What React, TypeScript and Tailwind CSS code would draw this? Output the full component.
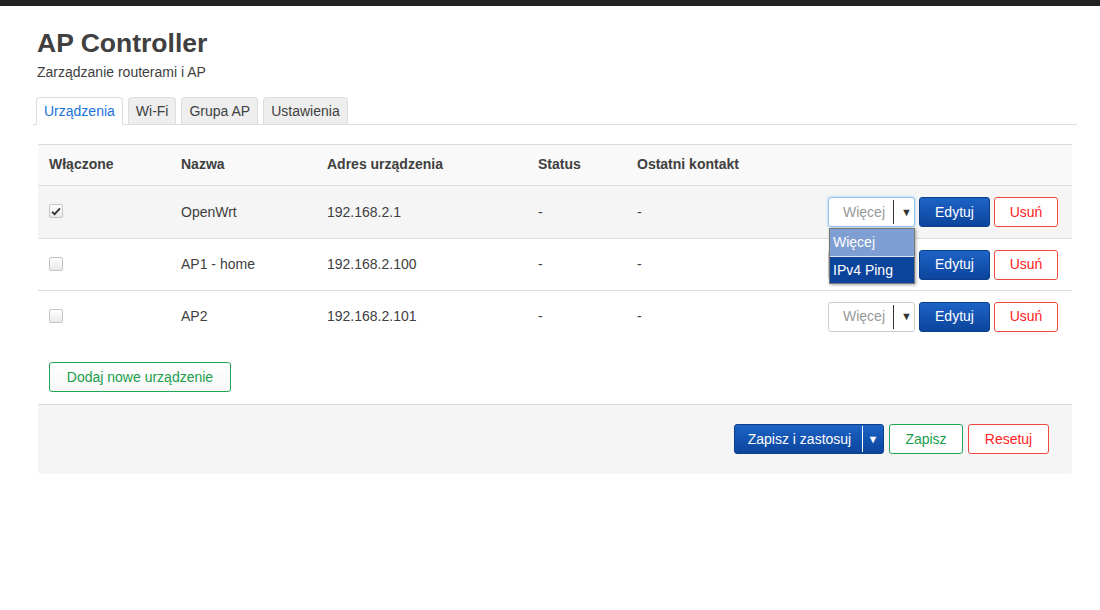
import React from "react";

type Device = { name: string; addr: string; enabled: boolean; open?: boolean };

const devices: Device[] = [
  { name: "OpenWrt", addr: "192.168.2.1", enabled: true, open: true },
  { name: "AP1 - home", addr: "192.168.2.100", enabled: false },
  { name: "AP2", addr: "192.168.2.101", enabled: false },
];

const Check = ({ on }: { on: boolean }) => (
  <div className="flex h-[14px] w-[14px] items-center justify-center rounded-[2px] border border-[#c4c4c4] bg-gradient-to-b from-white to-[#e9e9e9]">
    {on && (
      <svg width="10" height="9" viewBox="0 0 10 9">
        <path d="M1 4.8 L3.6 7.2 L9 1.4" fill="none" stroke="#333" strokeWidth="1.8" />
      </svg>
    )}
  </div>
);

const MoreSelect = ({ open }: { open?: boolean }) => (
  <div className="relative">
    <div
      className={
        open
          ? "flex h-[30px] w-[87px] items-center rounded-[3px] border border-[#8ec2ec] bg-white shadow-[0_0_3px_rgba(102,175,233,0.6)]"
          : "flex h-[30px] w-[87px] items-center rounded-[3px] border border-[#cccccc] bg-white"
      }
    >
      <span className="w-[64px] pl-[14px] text-[#999]">Więcej</span>
      <span className="h-[24px] w-px bg-[#333]" />
      <span className="flex-1 pl-[7px] text-[11px] text-[#333]">▼</span>
    </div>
    {open && (
      <div className="absolute left-px top-[31px] z-10 w-[86px] border border-[#777] bg-white shadow-[1px_1px_3px_rgba(0,0,0,0.35)]">
        <div className="h-[28px] border-b border-[#dbe4f3] bg-[#7f9ed1] pl-[3px] leading-[27px] text-white">Więcej</div>
        <div className="h-[26px] bg-[#0c449c] pl-[3px] leading-[26px] text-white">IPv4 Ping</div>
      </div>
    )}
  </div>
);

const App = () => {
  return (
    <div className="min-h-[610px] bg-white font-['Liberation_Sans',Arial,sans-serif] text-[14px] text-[#404040]">
      <div className="h-[6px] bg-[#222]" />
      <div className="ml-[33px] w-[1044px]">
        <div className="pl-[4px] pt-[23px]">
          <h1 className="text-[26.5px] font-bold leading-[29px] text-[#404040]">AP Controller</h1>
          <p className="mt-[4px] leading-[20px] text-[#404040]">Zarządzanie routerami i AP</p>
        </div>

        <ul className="mt-[15px] flex gap-[5px] border-b border-[#ddd] pl-[3px]">
          <li className="-mb-px h-[28px] rounded-t-[4px] border border-b-white border-[#ddd] bg-white px-[7px] leading-[26px] text-[#1a73d9]">
            Urządzenia
          </li>
          <li className="h-[27px] rounded-t-[4px] border border-b-0 border-[#ddd] bg-[#eee] px-[7px] leading-[26px]">Wi-Fi</li>
          <li className="h-[27px] rounded-t-[4px] border border-b-0 border-[#ddd] bg-[#eee] px-[7px] leading-[26px]">Grupa AP</li>
          <li className="h-[27px] rounded-t-[4px] border border-b-0 border-[#ddd] bg-[#eee] px-[7px] leading-[26px]">Ustawienia</li>
        </ul>

        <div className="ml-[5px] mt-[19px] w-[1034px]">
          <div className="grid h-[41px] grid-cols-[132px_146px_211px_99px_1fr] items-center border-t border-[#ddd] bg-[#f9f9f9] pb-[2px] font-bold">
            <div className="px-[11px]">Włączone</div>
            <div className="px-[11px]">Nazwa</div>
            <div className="px-[11px]">Adres urządzenia</div>
            <div className="px-[11px]">Status</div>
            <div className="px-[11px]">Ostatni kontakt</div>
          </div>
          {devices.map((d, i) => (
            <div
              key={d.name}
              className={
                i === 0
                  ? "grid h-[53px] grid-cols-[132px_146px_211px_99px_1fr] items-center border-t border-[#ddd] bg-[#f5f5f5]"
                  : "grid h-[52px] grid-cols-[132px_146px_211px_99px_1fr] items-center border-t border-[#ddd]"
              }
            >
              <div className="px-[11px] pb-[2px]">
                <Check on={d.enabled} />
              </div>
              <div className="px-[11px]">{d.name}</div>
              <div className="px-[11px]">{d.addr}</div>
              <div className="px-[11px]">-</div>
              <div className="flex items-center justify-between pl-[11px] pr-[14px]">
                <span>-</span>
                <div className="flex items-center gap-[4px]">
                  <MoreSelect open={d.open} />
                  <button className="h-[30px] w-[71px] rounded-[3px] border border-[#0a3f8c] bg-gradient-to-b from-[#1d63c6] to-[#0b459d] text-white">
                    Edytuj
                  </button>
                  <button className="h-[30px] w-[64px] rounded-[3px] border border-[#f0493b] bg-white text-[#f22]">Usuń</button>
                </div>
              </div>
            </div>
          ))}

          <div className="pb-[12px] pl-[11px] pt-[20px]">
            <button className="h-[30px] w-[182px] rounded-[3px] border border-[#22a656] bg-gradient-to-b from-white to-[#f7f7f7] text-[#1a9e4a]">
              Dodaj nowe urządzenie
            </button>
          </div>

          <div className="flex h-[70px] items-start justify-end gap-[5px] rounded-b-[3px] border-t border-[#ddd] bg-[#f5f5f5] pr-[23px] pt-[19px]">
            <button className="flex h-[30px] w-[150px] items-center rounded-[3px] border border-[#0a3f8c] bg-gradient-to-b from-[#1d63c6] to-[#0b459d] text-white">
              <span className="w-[127px] pl-[2px] text-center">Zapisz i zastosuj</span>
              <span className="h-[26px] w-px bg-white" />
              <span className="flex-1 text-center text-[11px]">▼</span>
            </button>
            <button className="h-[30px] w-[74px] rounded-[3px] border border-[#22a656] bg-white text-[#1a9e4a]">Zapisz</button>
            <button className="h-[30px] w-[81px] rounded-[3px] border border-[#f0493b] bg-white text-[#f22]">Resetuj</button>
          </div>
        </div>
      </div>
    </div>
  );
};

export default App;
